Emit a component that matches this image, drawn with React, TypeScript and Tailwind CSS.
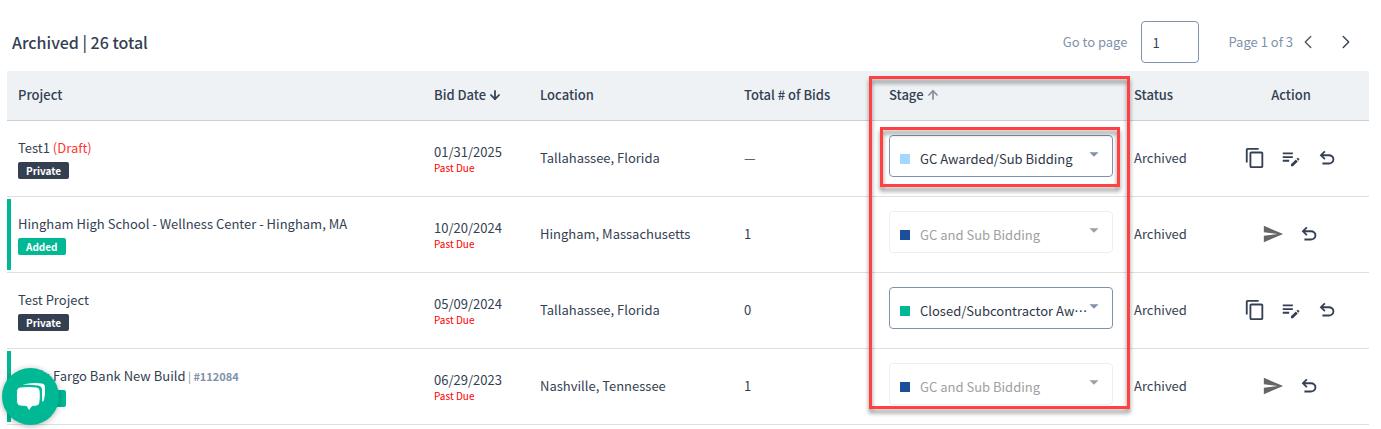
import React, { useState } from 'react';
import { ArrowDown, ArrowUp, ChevronLeft, ChevronRight } from 'lucide-react';
import { MdContentCopy, MdEditNote, MdSend, MdArrowDropDown } from 'react-icons/md';

type Bid = {
  id: number;
  name: string;
  note?: 'draft' | string;
  added: boolean;
  date: string;
  location: string;
  bids: string;
  stage: string;
};

const STAGES = [
  { name: 'GC Awarded/Sub Bidding', color: 'bg-[#a6d8ff]' },
  { name: 'GC and Sub Bidding', color: 'bg-[#1a4f9c]' },
  { name: 'Closed/Subcontractor Awarded', color: 'bg-[#00b894]' },
];

const BIDS: Bid[] = [
  { id: 1, name: 'Test1', note: 'draft', added: false, date: '01/31/2025', location: 'Tallahassee, Florida', bids: '—', stage: 'GC Awarded/Sub Bidding' },
  { id: 2, name: 'Hingham High School - Wellness Center - Hingham, MA', added: true, date: '10/20/2024', location: 'Hingham, Massachusetts', bids: '1', stage: 'GC and Sub Bidding' },
  { id: 3, name: 'Test Project', added: false, date: '05/09/2024', location: 'Tallahassee, Florida', bids: '0', stage: 'Closed/Subcontractor Awarded' },
  { id: 4, name: 'Wells Fargo Bank New Build', note: '#112084', added: true, date: '06/29/2023', location: 'Nashville, Tennessee', bids: '1', stage: 'GC and Sub Bidding' },
];

const UndoIcon = () => (
  <svg viewBox="0 -960 960 960" className="size-[22px] fill-current" aria-hidden="true">
    <path d="M280-200v-80h284q63 0 109.500-40T720-420q0-60-46.500-100T564-560H312l104 104-56 56-200-200 200-200 56 56-104 104h252q97 0 169.500 63T800-420q0 94-72.500 157T564-200H280Z" />
  </svg>
);

function StageSelect({ bid, highlighted }: { bid: Bid; highlighted: boolean }) {
  const [stage, setStage] = useState(bid.stage);
  const color = STAGES.find((s) => s.name === stage)?.color;

  return (
    <div className="relative mb-1 w-56">
      <select
        aria-label={`Stage of ${bid.name}`}
        value={stage}
        disabled={bid.added}
        onChange={(e) => setStage(e.target.value)}
        className="block h-[42px] w-full appearance-none text-ellipsis rounded border border-[#8091ab] bg-white pt-[6px] pr-6 pl-[30px] text-[#2d3748] disabled:border-[#eeeeee] disabled:text-[#a0a0a0] disabled:opacity-100"
      >
        {STAGES.map((s) => (
          <option key={s.name}>{s.name}</option>
        ))}
      </select>
      <span className={`absolute top-[19px] left-[11px] size-[10px] ${color}`} />
      <MdArrowDropDown className={`pointer-events-none absolute top-2 right-2 size-[22px] ${bid.added ? 'text-[#a0a0a0]' : 'text-[#8091ab]'}`} />
      {highlighted && (
        <div className="pointer-events-none absolute -top-2 -right-[7px] -bottom-[10px] -left-[9px] border-3 border-[#ff4141] drop-shadow-[0_4px_2px_rgba(0,0,0,0.45)]" />
      )}
    </div>
  );
}

function BidRow({ bid, highlighted }: { bid: Bid; highlighted: boolean }) {
  return (
    <tr className="h-[76px] border-b border-[#dfdfdf]">
      <td className="relative pl-[11px]">
        {bid.added && <span className="absolute inset-y-[2px] left-0 w-1 bg-[#00b894]" />}
        <div className="leading-5">
          {bid.name}
          {bid.note === 'draft' && <span className="text-[#ff3535]"> (Draft)</span>}
          {bid.note && bid.note !== 'draft' && (
            <span className="text-[11px] text-[#8091ab]"> | <b>{bid.note}</b></span>
          )}
        </div>
        <span className={`mt-1 block w-fit rounded-xs px-2 text-[10px] leading-[17px] font-bold text-white ${bid.added ? 'bg-[#00b894]' : 'bg-[#343f52]'}`}>
          {bid.added ? 'Added' : 'Private'}
        </span>
      </td>
      <td className="pl-[11px]">
        <div className="leading-5">{bid.date}</div>
        <div className="text-[10px] leading-3 text-[#ff0000]">Past Due</div>
      </td>
      <td className="pl-[11px]">{bid.location}</td>
      <td className="pl-[11px]">{bid.bids}</td>
      <td className="pl-[11px]">
        <StageSelect bid={bid} highlighted={highlighted} />
      </td>
      <td className="pl-[11px]">Archived</td>
      <td>
        <div className="flex items-center justify-center gap-[14px]">
          {bid.added ? (
            <button aria-label="Send" className="text-[#666666]"><MdSend className="size-[22px]" /></button>
          ) : (
            <>
              <button aria-label="Copy"><MdContentCopy className="size-[22px]" /></button>
              <button aria-label="Edit"><MdEditNote className="size-[22px]" /></button>
            </>
          )}
          <button aria-label="Restore"><UndoIcon /></button>
        </div>
      </td>
    </tr>
  );
}

function App() {
  const [page, setPage] = useState('1');

  return (
    <div className="pr-3 pl-[7px] pt-[21px] font-['Noto_Sans_CJK_KR',sans-serif] text-[13px] leading-5 text-[#343f52]">
      {/* Title and paging */}
      <header className="mb-2 flex items-center justify-between pl-[5px]">
        <h1 className="text-base font-medium">Archived | 26 total</h1>
        <div className="flex items-center text-[#8091ab]">
          <label htmlFor="page">Go to page</label>
          <input
            id="page"
            value={page}
            onChange={(e) => setPage(e.target.value)}
            className="mx-[14px] h-[42px] w-[58px] rounded border border-[#8091ab] px-[10px] text-[#343f52]"
          />
          <span className="ml-[15px]">Page 1 of 3</span>
          <button aria-label="Previous page" className="ml-1 text-[#555555]"><ChevronLeft className="size-[22px]" strokeWidth={1.5} /></button>
          <button aria-label="Next page" className="mr-3 ml-4 text-[#343f52]"><ChevronRight className="size-[22px]" strokeWidth={1.5} /></button>
        </div>
      </header>

      <table className="w-full table-fixed text-left">
        <colgroup>
          <col />
          <col className="w-[106px]" />
          <col className="w-[204px]" />
          <col className="w-[145px]" />
          <col className="w-[245px]" />
          <col className="w-[90px]" />
          <col className="w-[156px]" />
        </colgroup>
        <thead>
          <tr className="h-[49px] border-b border-[#cbd1d6] bg-[#eef2f5]">
            <th className="pl-[11px] font-medium">Project</th>
            <th className="pl-[11px] font-medium">
              <span className="flex items-center gap-[2px]">Bid Date <ArrowDown className="size-[14px]" strokeWidth={3} /></span>
            </th>
            <th className="pl-[11px] font-medium">Location</th>
            <th className="pl-[11px] font-medium">Total # of Bids</th>
            <th className="relative pl-[11px] font-medium">
              <span className="flex items-center gap-[2px]">Stage <ArrowUp className="size-[14px] text-[#8b929c]" strokeWidth={3} /></span>
              {/* Marks the whole stage column */}
              <div className="pointer-events-none absolute top-[5px] -left-[9px] z-10 h-[333px] w-[261px] border-3 border-[#ff4141] drop-shadow-[0_4px_2px_rgba(0,0,0,0.45)]" />
            </th>
            <th className="pl-[11px] font-medium">Status</th>
            <th className="text-center font-medium">Action</th>
          </tr>
        </thead>
        <tbody>
          {BIDS.map((bid) => (
            <BidRow key={bid.id} bid={bid} highlighted={bid.id === 1} />
          ))}
        </tbody>
      </table>

      {/* Chat launcher */}
      <button aria-label="Open chat" className="fixed bottom-1 left-[2px] flex size-[57px] items-center justify-center rounded-full bg-[#00b894] shadow-[0_1px_6px_rgba(0,0,0,0.3)]">
        <svg viewBox="0 0 30 30" className="size-[30px]" aria-hidden="true">
          <path d="M6 3 Q15 0 26 1.500 Q29 2 29 5 Q29.500 12 28 18 Q27.500 19.500 26 19.500 V8 Q26 4 22 3.500 Q14 2.500 6 3Z" fill="#fff" />
          <path d="M4 5 Q13 4 20.500 5 Q24 5.500 24.200 9 Q24.700 15 23.800 21 Q23.300 23.500 20.500 24 L16 24.500 L13 29 L10.500 24.500 L4 24 Q1 23.500 .7 20.500 Q0 14 .7 8.500 Q1 5.500 4 5Z" fill="#fff" stroke="#00b894" strokeWidth="1" />
        </svg>
      </button>
    </div>
  );
}

export default App;
